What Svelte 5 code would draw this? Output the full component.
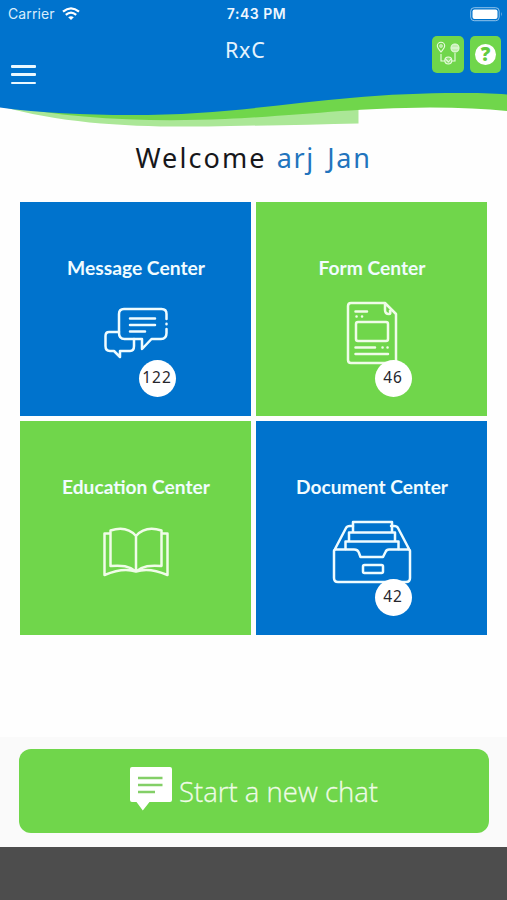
<script>
  const tiles = [
    { title: 'Message Center', icon: 'message', tone: 'blue', count: 122, width: 138 },
    { title: 'Form Center', icon: 'form', tone: 'green', count: 46, width: 107 },
    { title: 'Education Center', icon: 'book', tone: 'green', count: null, width: 148 },
    { title: 'Document Center', icon: 'drawer', tone: 'blue', count: 42, width: 152 }
  ];
</script>

<div class="screen">
  <header>
    <svg class="wave" width="507" height="130" viewBox="0 0 507 130">
      <path d="M0 106C70 126 150 128 230 126Q300 125 358.500 123.500V106Z" fill="#abe797" />
      <path d="M0 104C70 120 155 122 225 119C310 115 350 108 430 107.500Q475 107.500 507 111V90H0Z" fill="#70d64b" />
      <path d="M0 0H507V94.500C470 92 410 92.500 350 98C280 104 220 115 130 115C85 115 40 113 0 107.500Z" fill="#0073cd" />
    </svg>
    <div class="status">
      <div class="carrier">
        <span>Carrier</span>
        <svg width="18" height="14" viewBox="0 0 18 14" fill="none" stroke="#fff" stroke-width="2.200">
          <path d="M1 4.700Q9-2 17 4.700M3.800 7.900Q9 3.500 14.200 7.900" />
          <path d="M6.200 10.300Q9 8 11.800 10.300L9 13Z" fill="#fff" stroke="none" />
        </svg>
      </div>
      <span class="time">7:43 PM</span>
      <svg class="battery" width="33" height="15" viewBox="0 0 33 15">
        <rect x=".7" y=".7" width="28.500" height="13" rx="3.500" fill="none" stroke="#8fc2ea" />
        <rect x="2.500" y="2.500" width="25" height="9.500" rx="2" fill="#fff" />
        <path d="M31 5Q32.500 7 31 9.500Z" fill="#8fc2ea" />
      </svg>
    </div>
    <div class="nav">
      <button class="menu" aria-label="Menu"><i></i><i></i><i></i></button>
      <h1>RxC</h1>
      <div class="actions">
        <button aria-label="Route">
          <svg width="32" height="37" viewBox="0 0 32 37" fill="none" stroke="#e9fbe2" stroke-width="1.100">
            <path d="M9 16C7 13.500 5.300 12 5.300 10A3.700 3.700 0 0 1 12.700 10C12.700 12 11 13.500 9 16Z" />
            <circle cx="9" cy="10" r="1.200" />
            <path d="M9 18V25H13M19.500 25H23V17" />
            <circle cx="23" cy="12" r="4" fill="#93e077" />
            <path d="M19 12H27M23 8V16M21 9V15M25 9V15" />
            <circle cx="16.300" cy="24.500" r="3.500" fill="#93e077" />
            <path d="M13.500 23L16.500 26L19 23" />
          </svg>
        </button>
        <button aria-label="Help"><span class="help">?</span></button>
      </div>
    </div>
  </header>

  <h2><span class="hello">Welcome</span><span class="name">arj Jan</span></h2>

  <main>
    {#each tiles as tile}
      <section class={tile.tone}>
        <svg class="title" width="200" height="26" role="heading" aria-level="3">
          <text x="100" y="19.500" text-anchor="middle" textLength={tile.width} lengthAdjust="spacingAndGlyphs">{tile.title}</text>
        </svg>
        <div class="art">
          {#if tile.icon === 'message'}
            <svg width="64" height="52" viewBox="0 0 64 52">
              <path d="M62.500 12V7Q62.500 2 57.500 2H20Q15 2 15 7V26Q15 32 20.500 32H38V42L47.500 32H57Q62.500 32 62.500 26V22M62.500 16.800V17.200" />
              <path d="M15 25H5Q1.500 25 1.500 29V39Q1.500 44 6 44H10L16 50V44H26Q30 44 30 39V32" />
              <path d="M26 11.500H51M26 18H51M26 24.500H41" />
            </svg>
          {:else if tile.icon === 'form'}
            <svg width="52" height="64" viewBox="0 0 52 64">
              <path d="M39 2H5Q2 2 2 5V59Q2 62 5 62H47Q50 62 50 59V13L39 2V9Q39 13 43 13Q45 13 44 10" />
              <rect x="10" y="21" width="32" height="19" rx="2" />
              <path d="M9.500 10.500H21M10.500 15.500H10.600M16 15.500H16.100M9.500 46.500H29M36.500 46.500H36.600M41.500 46.500H41.600M9.500 53H42" />
            </svg>
          {:else if tile.icon === 'book'}
            <svg width="66" height="50" viewBox="0 0 66 50">
              <path d="M33 9C26 1 17 .5 7.500 3.500V39C19 38 26 39 33 44.500C40 39 47 38 58.500 39V3.500C49 .5 40 1 33 9V44M7.500 6.500H1.500V48Q20 40 33 44.500Q46 40 64.500 48V6.500H58.500" />
            </svg>
          {:else}
            <svg width="80" height="64" viewBox="0 0 80 64">
              <path d="M2 31Q2 29.500 4 29.500H22Q26 29.500 27 33L28.500 37H51L53.500 32Q54.500 29.500 57 29.500H76Q78 29.500 78 31V58Q78 62 74 62H6Q2 62 2 58ZM3 29L14 8Q15 6 18 6H21M77 29L66 8Q65 6 62 6H59" />
              <path d="M21 12V2H60V12M17 21V12.500H63V21M13.500 29V21.500H66.500V29" />
              <rect x="31" y="45" width="20" height="8" rx="1.500" />
            </svg>
          {/if}
        </div>
        {#if tile.count}<b class="badge"><span>{tile.count}</span></b>{/if}
      </section>
    {/each}
  </main>

  <footer>
    <button class="chat">
      <svg class="bubble" width="42" height="44" viewBox="0 0 42 44">
        <path d="M2 0H40Q42 0 42 2V33Q42 35 40 35H19.500L12.800 43.500L6.500 35H2Q0 35 0 33V2Q0 0 2 0Z" fill="#fff" />
        <path d="M8 11H32.500M8 18H32.500M8 25H25" stroke="#83cf67" stroke-width="2.300" />
      </svg>
      <svg class="label" width="200" height="44">
        <text x="0" y="33" textLength="199" lengthAdjust="spacingAndGlyphs">Start a new chat</text>
      </svg>
    </button>
  </footer>
  <div class="bottom"></div>
</div>

<style>
  :global(body) { margin: 0; background: #fff; }
  .screen { width: 507px; height: 900px; display: flex; flex-direction: column; overflow: hidden; background: #fefefe; font-family: Lato, sans-serif; }
  button { border: 0; padding: 0; font: inherit; }
  header { position: relative; height: 130px; flex: none; color: #fff; }
  .wave { position: absolute; inset: 0; }
  .status { position: relative; height: 28px; display: grid; grid-template-columns: 1fr auto 1fr; align-items: center; box-sizing: border-box; padding: 0 4px 0 8px; font: 14px/28px Inter, sans-serif; }
  .carrier { display: flex; align-items: center; gap: 7px; color: #d9edfc; letter-spacing: .1px; }
  .time { font-weight: 600; font-size: 14px; letter-spacing: .5px; color: #eef7ff; margin-left: 2px; }
  .battery { justify-self: end; }
  .nav { position: relative; display: grid; grid-template-columns: 214px auto 1fr; padding: 0 6px 0 11px; }
  .menu { margin-top: 37px; width: 26px; height: 19px; background: none; display: flex; flex-direction: column; justify-content: space-between; }
  .menu i { height: 2.500px; width: 25px; background: #eaf8ff; border-radius: 1px; }
  h1 { margin: 7px 0 0; font: 21.500px/30px "Noto Sans", sans-serif; letter-spacing: .7px; color: #e5f3fd; }
  .actions { justify-self: end; display: flex; gap: 6px; margin-top: 8px; }
  .actions button { width: 32px; height: 37px; border-radius: 5px; background: #70d64b; display: grid; place-items: center; }
  .actions button:last-child { width: 31px; }
  .help { width: 21px; height: 21px; border-radius: 50%; background: #fff; color: #62cb40; font: 800 19px/21px "Open Sans", sans-serif; text-align: center; }
  h2 { display: flex; justify-content: center; gap: 10px; margin: 10px 0 0; height: 39px; font: 27px/36px "Noto Sans", sans-serif; letter-spacing: 2.100px; color: #17171b; }
  .name { color: #2274bd; letter-spacing: 1.700px; word-spacing: 3.500px; }
  main { display: grid; grid-template: 214px 214px / 231px 231px; gap: 5px; padding: 23px 20px 0; }
  section { position: relative; display: flex; flex-direction: column; align-items: center; }
  .blue { background: #0073cd; }
  .green { background: #70d64b; }
  .title { margin-top: 53px; fill: #f1fcff; font: 700 19px Lato, sans-serif; }
  .art { height: 64px; margin-top: 20px; display: grid; place-items: center; }
  .art svg { fill: none; stroke: #effcff; stroke-width: 2.500; stroke-linecap: round; stroke-linejoin: round; }
  .green .art svg { stroke: #f0fce8; }
  .badge { position: absolute; left: 118.500px; top: 157.500px; width: 37px; height: 37px; border-radius: 50%; background: #fff; color: #26262c; font: 15.500px/34px "Noto Sans", sans-serif; letter-spacing: 1px; text-align: center; }
  footer { margin-top: 102px; height: 110px; flex: none; box-sizing: border-box; padding: 12px 18px 0 19px; background: #fafafa; }
  .chat { width: 470px; height: 84px; border-radius: 12px; background: #70d64b; display: flex; justify-content: center; align-items: center; gap: 7px; }
  .bubble { margin-bottom: 4px; }
  .label { fill: #effbe7; stroke: #effbe7; stroke-width: .3; font: 300 27.500px "Open Sans", sans-serif; }
  .bottom { flex: 1; background: #4d4d4d; }
</style>
